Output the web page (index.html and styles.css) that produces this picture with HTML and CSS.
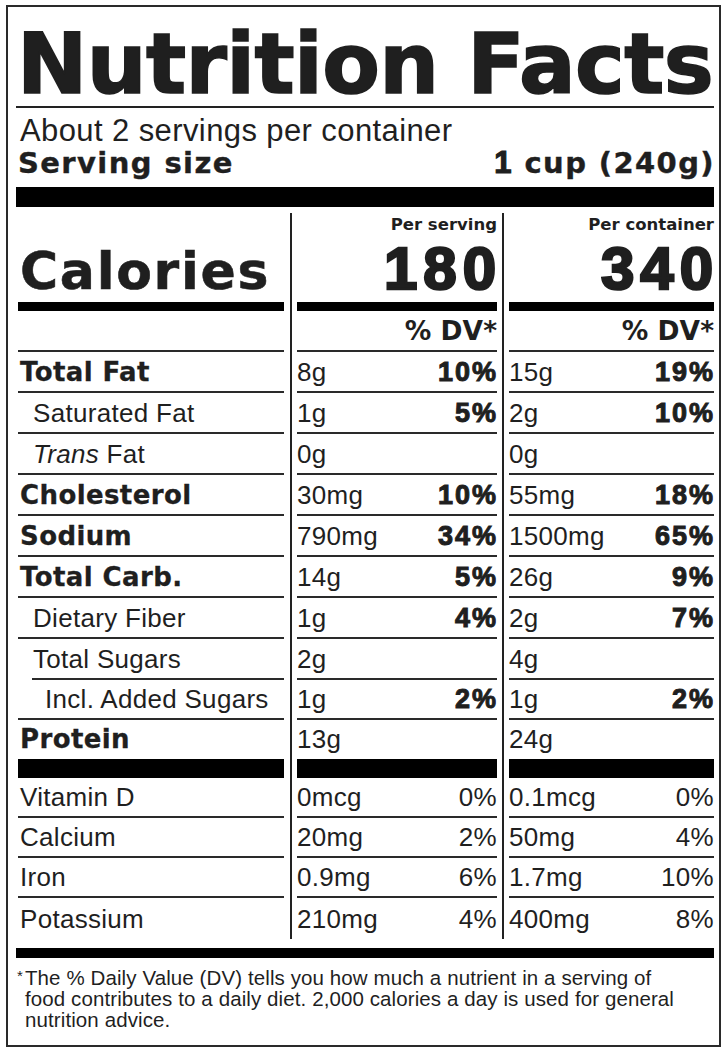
FILE: index.html
```html
<!DOCTYPE html>
<html lang="en">
<head>
<meta charset="utf-8">
<title>Nutrition Facts</title>
<link rel="stylesheet" href="styles.css">
</head>
<body>
<div class="label">
  <h1 class="title">Nutrition Facts</h1>
  <p class="servings">About 2 servings per container</p>
  <div class="serving-size"><span>Serving size</span><span><span class="one">1</span> cup (240g)</span></div>
  <div class="bar-thick"></div>

  <div class="table">
    <div class="sep sep1"></div>
    <div class="sep sep2"></div>

    <div class="cell cal-name">Calories</div>
    <div class="cell cal-val"><span class="per">Per serving</span><span class="big">180</span></div>
    <div class="cell cal-val"><span class="per">Per container</span><span class="big">340</span></div>

    <div class="cell"></div>
    <div class="cell dvh">% DV*</div>
    <div class="cell dvh">% DV*</div>

    <div class="cell name b">Total Fat</div>
    <div class="cell val"><span>8g</span><span class="pb">10%</span></div>
    <div class="cell val"><span>15g</span><span class="pb">19%</span></div>

    <div class="cell name ind">Saturated Fat</div>
    <div class="cell val"><span>1g</span><span class="pb">5%</span></div>
    <div class="cell val"><span>2g</span><span class="pb">10%</span></div>

    <div class="cell name ind"><span><i>Trans</i> Fat</span></div>
    <div class="cell val"><span>0g</span></div>
    <div class="cell val"><span>0g</span></div>

    <div class="cell name b">Cholesterol</div>
    <div class="cell val"><span>30mg</span><span class="pb">10%</span></div>
    <div class="cell val"><span>55mg</span><span class="pb">18%</span></div>

    <div class="cell name b">Sodium</div>
    <div class="cell val"><span>790mg</span><span class="pb">34%</span></div>
    <div class="cell val"><span>1500mg</span><span class="pb">65%</span></div>

    <div class="cell name b">Total Carb.</div>
    <div class="cell val"><span>14g</span><span class="pb">5%</span></div>
    <div class="cell val"><span>26g</span><span class="pb">9%</span></div>

    <div class="cell name ind">Dietary Fiber</div>
    <div class="cell val"><span>1g</span><span class="pb">4%</span></div>
    <div class="cell val"><span>2g</span><span class="pb">7%</span></div>

    <div class="cell name sugars">Total Sugars</div>
    <div class="cell val"><span>2g</span></div>
    <div class="cell val"><span>4g</span></div>

    <div class="cell name ind2">Incl. Added Sugars</div>
    <div class="cell val"><span>1g</span><span class="pb">2%</span></div>
    <div class="cell val"><span>1g</span><span class="pb">2%</span></div>

    <div class="cell name b protein">Protein</div>
    <div class="cell val protein"><span>13g</span></div>
    <div class="cell val protein"><span>24g</span></div>

    <div class="cell name">Vitamin D</div>
    <div class="cell val"><span>0mcg</span><span>0%</span></div>
    <div class="cell val"><span>0.1mcg</span><span>0%</span></div>

    <div class="cell name">Calcium</div>
    <div class="cell val"><span>20mg</span><span>2%</span></div>
    <div class="cell val"><span>50mg</span><span>4%</span></div>

    <div class="cell name">Iron</div>
    <div class="cell val"><span>0.9mg</span><span>6%</span></div>
    <div class="cell val"><span>1.7mg</span><span>10%</span></div>

    <div class="cell name last">Potassium</div>
    <div class="cell val last"><span>210mg</span><span>4%</span></div>
    <div class="cell val last"><span>400mg</span><span>8%</span></div>
  </div>

  <div class="bar-bottom"></div>
  <p class="foot"><span class="ast">*</span>The % Daily Value (DV) tells you how much a nutrient in a serving of<br>food contributes to a daily diet. 2,000 calories a day is used for general<br>nutrition advice.</p>
</div>
</body>
</html>
```

FILE: styles.css
```css
html, body {
  margin: 0;
  padding: 0;
  background: #fff;
}

.label {
  box-sizing: border-box;
  width: 715px;
  height: 1042px;
  margin: 5px 0 0 6px;
  border: 2px solid #2a2a2a;
  padding: 15px 5px 0 8px;
  font-family: "Liberation Sans", Arial, sans-serif;
  color: #1f1f1f;
}

.title {
  margin: 0;
  padding-left: 1px;
  font-family: "DejaVu Sans", sans-serif;
  font-weight: bold;
  font-size: 84px;
  line-height: 84px;
  letter-spacing: -0.6px;
  -webkit-text-stroke: 1.6px #1f1f1f;
  white-space: nowrap;
  border-bottom: 2px solid #222;
}

.servings {
  margin: 8px 0 0 4px;
  font-size: 31px;
  line-height: 30px;
  letter-spacing: 0.4px;
  white-space: nowrap;
}

.serving-size {
  display: flex;
  justify-content: space-between;
  margin: 2px -1px 0 0;
  padding-left: 2px;
  font-family: "DejaVu Sans", sans-serif;
  font-weight: bold;
  font-size: 29px;
  line-height: 30px;
  letter-spacing: 1.4px;
  -webkit-text-stroke: 0.4px #1f1f1f;
  white-space: nowrap;
}

.one {
  font-family: "Liberation Sans", Arial, sans-serif;
  font-size: 31px;
  -webkit-text-stroke: 1.2px #1f1f1f;
}

.bar-thick {
  height: 20px;
  margin-top: 9px;
  background: #000;
}

.table {
  display: grid;
  margin: 6px 0 0 2px;
  grid-template-columns: 266px 13px 200px 12px 205px;
  grid-template-rows: 98px 41px 41px 41px 41px 41px 41px 41px 41px 41px 40px 58px 40px 40px 40px 41px;
}

.sep {
  grid-row: 1 / -1;
  width: 2px;
  background: #222;
}

.sep1 {
  grid-column: 2;
  margin-left: 6px;
}

.sep2 {
  grid-column: 4;
  margin-left: 5px;
}

.cell {
  display: flex;
  align-items: center;
  border-bottom: 2px solid #2a2a2a;
  font-size: 26px;
  line-height: 30px;
  letter-spacing: 0.3px;
  white-space: nowrap;
}

.cal-name {
  align-items: flex-end;
  padding: 0 0 5px 2px;
  border-bottom: 9px solid #000;
  font-family: "DejaVu Sans", sans-serif;
  font-weight: bold;
  font-size: 52px;
  line-height: 52px;
  letter-spacing: 1.7px;
  -webkit-text-stroke: 0.6px #1f1f1f;
}

.cal-val {
  flex-direction: column;
  align-items: flex-end;
  justify-content: space-between;
  padding: 4px 0 3px;
  border-bottom: 9px solid #000;
}

.per {
  font-family: "DejaVu Sans", sans-serif;
  font-weight: bold;
  font-size: 16.5px;
  line-height: 16px;
  letter-spacing: 0;
}

.big {
  font-weight: bold;
  font-size: 60px;
  line-height: 61px;
  letter-spacing: 6px;
  margin-right: -5px;
  -webkit-text-stroke: 2.6px #1f1f1f;
}

.dvh {
  justify-content: flex-end;
  font-family: "DejaVu Sans", sans-serif;
  font-weight: bold;
  font-size: 26.5px;
  letter-spacing: 0;
}

.name {
  padding-left: 2px;
}

.name.b {
  font-family: "DejaVu Sans", sans-serif;
  font-weight: bold;
  letter-spacing: 0.4px;
  -webkit-text-stroke: 0.3px #1f1f1f;
}

.name.ind {
  padding-left: 15px;
}

.name.sugars {
  margin-left: 14px;
  padding-left: 1px;
}

.name.ind2 {
  padding-left: 27px;
}

.val {
  justify-content: space-between;
}

.pb {
  font-weight: bold;
  font-size: 27px;
  letter-spacing: 2px;
  margin-right: -1px;
  -webkit-text-stroke: 1px #1f1f1f;
}

.protein {
  border-bottom: 19px solid #000;
  align-items: flex-start;
  padding-top: 4px;
}

.last {
  border-bottom: none;
}

.bar-bottom {
  height: 10px;
  margin-top: 9px;
  background: #000;
}

.foot {
  margin: 9px 0 0;
  padding-left: 9px;
  text-indent: -8px;
  font-size: 20.5px;
  line-height: 21px;
  letter-spacing: 0.1px;
  white-space: nowrap;
}

.ast {
  display: inline-block;
  width: 8px;
  text-indent: 0;
  font-size: 15px;
  vertical-align: top;
  line-height: 18px;
}
```
